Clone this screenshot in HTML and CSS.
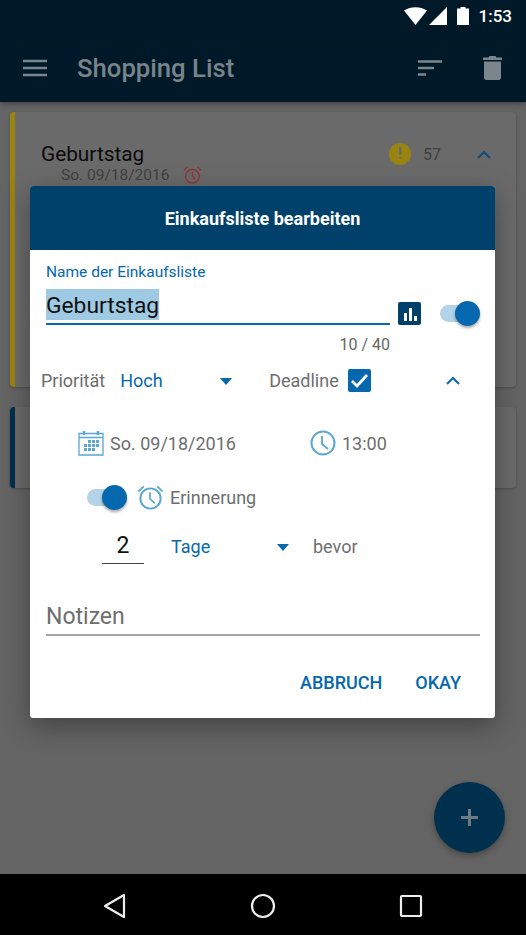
FILE: index.html
```html
<!DOCTYPE html>
<html lang="de">
<head>
    <meta charset="UTF-8">
    <meta name="viewport" content="width=device-width, initial-scale=1.0">
    <title>Shopping List</title>
    <link rel="stylesheet" href="styles.css">
</head>
<body>
<div class="screen">
    <div class="app">
        <div class="status-bar">
            <svg class="wifi" width="23" height="18" viewBox="0 0 23 18"><path d="M0 3.500 C6.500 -1 16.500 -1 23 3.500 L11.500 18 Z" fill="#fff"/></svg>
            <svg class="status-icon" width="18" height="18" viewBox="0 0 18 18"><path d="M0 18 L18 0 V18 Z" fill="#fff"/></svg>
            <svg class="status-icon battery" width="12" height="18" viewBox="0 0 12 18"><path d="M3.500 0 H8.500 V1.500 H12 V18 H0 V1.500 H3.500 Z" fill="#fff"/></svg>
            <span class="clock">1:53</span>
        </div>
        <header class="toolbar">
            <svg class="menu-icon" width="24" height="18" viewBox="0 0 24 18"><path d="M0 2 H24 M0 9 H24 M0 16 H24" stroke="#7a858c" stroke-width="2.500" fill="none"/></svg>
            <h1 class="toolbar-title">Shopping List</h1>
            <svg class="sort-icon" width="24" height="16" viewBox="0 0 24 16"><path d="M0 1.500 H24 M0 8 H16 M0 14.500 H8" stroke="#7a858c" stroke-width="2.500" fill="none"/></svg>
            <svg class="trash-icon" width="19" height="24" viewBox="0 0 19 24"><path d="M0 1.500 H5.500 L6.500 0 H12.500 L13.500 1.500 H19 V4 H0 Z M1 5.500 H18 V21.500 Q18 24 15.500 24 H3.500 Q1 24 1 21.500 Z" fill="#7a858c"/></svg>
        </header>
        <main class="list">
            <section class="list-card card-high">
                <div class="card-row">
                    <span class="card-title">Geburtstag</span>
                    <span class="prio-badge">!</span>
                    <span class="card-count">57</span>
                    <svg class="card-chevron" width="14" height="9" viewBox="0 0 14 9"><path d="M1 8 L7 2 L13 8" stroke="#0f4c7c" stroke-width="2" fill="none"/></svg>
                </div>
                <div class="card-date">
                    <span>So. 09/18/2016</span>
                    <svg width="19" height="18" viewBox="1 1 22 21"><circle cx="12" cy="13" r="8" fill="none" stroke="#9a2e2e" stroke-width="1.500"/><path d="M12 8 V13 L15 16 M2 6 L6 2 M22 6 L18 2" stroke="#9a2e2e" stroke-width="1.500" fill="none"/></svg>
                </div>
            </section>
            <section class="list-card card-low"></section>
        </main>
        <button class="fab" type="button">
            <svg width="17" height="17" viewBox="0 0 17 17"><path d="M8.500 0 V17 M0 8.500 H17" stroke="#6f7b82" stroke-width="3" fill="none"/></svg>
        </button>
    </div>

    <div class="dialog">
        <div class="dialog-header">Einkaufsliste bearbeiten</div>
        <div class="dialog-body">
            <div class="name-label">Name der Einkaufsliste</div>
            <div class="name-row">
                <div class="name-field"><span class="selected">Geburtstag</span></div>
                <span class="stats-btn">
                    <svg width="16" height="16" viewBox="0 0 16 16"><path d="M2 7 H5 V15 H2 Z M7 2 H10 V15 H7 Z M12 10 H15 V15 H12 Z" fill="#fff"/></svg>
                </span>
                <span class="switch name-switch"><span class="switch-thumb"></span></span>
            </div>
            <div class="counter">10 / 40</div>

            <div class="prio-row">
                <span class="muted">Priorität</span>
                <span class="spinner prio-spinner">Hoch<span class="caret"></span></span>
                <span class="muted">Deadline</span>
                <span class="checkbox">
                    <svg width="23" height="23" viewBox="0 0 23 23"><path d="M4 12 L9 17 L19 6" stroke="#fff" stroke-width="2.800" fill="none"/></svg>
                </span>
                <svg class="collapse" width="14" height="9" viewBox="0 0 14 9"><path d="M1 8 L7 2 L13 8" stroke="#0568ae" stroke-width="2" fill="none"/></svg>
            </div>

            <div class="date-row">
                <svg width="26" height="26" viewBox="0 0 26 26">
                    <path d="M1 3.500 H25 V25 H1 Z M1 7.500 H25" stroke="#5aa7d2" stroke-width="1.300" fill="none"/>
                    <path d="M6 1 V5 M20 1 V5" stroke="#5aa7d2" stroke-width="2.500"/>
                    <path d="M10 10 H13 V13 H10 Z M14 10 H17 V13 H14 Z M18 10 H21 V13 H18 Z M6 14 H9 V17 H6 Z M10 14 H13 V17 H10 Z M14 14 H17 V17 H14 Z M18 14 H21 V17 H18 Z M6 18 H9 V21 H6 Z M10 18 H13 V21 H10 Z M14 18 H17 V21 H14 Z" fill="#5aa7d2"/>
                </svg>
                <span class="date-text">So. 09/18/2016</span>
                <svg class="time-icon" width="26" height="26" viewBox="0 0 26 26"><circle cx="13" cy="13" r="11.500" fill="none" stroke="#5aa7d2" stroke-width="2"/><path d="M12 6 V14 L18 19" stroke="#5aa7d2" stroke-width="1.800" fill="none"/></svg>
                <span class="date-text">13:00</span>
            </div>

            <div class="reminder-row">
                <span class="switch"><span class="switch-thumb"></span></span>
                <svg class="alarm-icon" width="27" height="27" viewBox="0 0 28 28"><circle cx="14" cy="15" r="10.500" fill="none" stroke="#5aa7d2" stroke-width="2"/><path d="M13.500 8.500 V15.500 L18.500 20 M1.500 8 L7 2.500 M26.500 8 L21 2.500" stroke="#5aa7d2" stroke-width="1.800" fill="none"/></svg>
                <span class="muted">Erinnerung</span>
            </div>

            <div class="days-row">
                <span class="days-value">2</span>
                <span class="spinner days-spinner">Tage<span class="caret"></span></span>
                <span class="muted">bevor</span>
            </div>

            <div class="notes">Notizen</div>

            <div class="dialog-actions">
                <span class="action">ABBRUCH</span>
                <span class="action">OKAY</span>
            </div>
        </div>
    </div>

    <nav class="nav-bar">
        <svg width="24" height="26" viewBox="0 0 24 26"><path d="M21 2 V24 L2 13 Z" stroke="#eee" stroke-width="2.200" stroke-linejoin="round" fill="none"/></svg>
        <svg width="26" height="26" viewBox="0 0 26 26"><circle cx="13" cy="13" r="11" stroke="#eee" stroke-width="2.200" fill="none"/></svg>
        <svg width="24" height="24" viewBox="0 0 24 24"><rect x="2" y="2" width="20" height="20" rx="1" stroke="#eee" stroke-width="2.200" fill="none"/></svg>
    </nav>
</div>
</body>
</html>
```

FILE: styles.css
```css
* {
    box-sizing: border-box;
}
html, body {
    margin: 0;
    padding: 0;
}
body {
    width: 526px;
    height: 935px;
    overflow: hidden;
    font-family: Roboto, "Liberation Sans", sans-serif;
}
.screen {
    position: relative;
    width: 526px;
    height: 935px;
    display: flex;
    flex-direction: column;
    background: #646464;
}
.app {
    position: relative;
    flex: 1;
    display: flex;
    flex-direction: column;
    background: #646464;
}
.status-bar {
    height: 36px;
    display: flex;
    align-items: center;
    justify-content: flex-end;
    padding: 0 14px 5px 0;
    background: #001928;
}
.wifi {
    margin-right: 2px;
}
.status-icon {
    margin-right: 5px;
}
.battery {
    margin: 0 10px 0 5px;
}
.clock {
    color: #fff;
    font-size: 17px;
    font-weight: 500;
}
.toolbar {
    height: 66px;
    display: flex;
    align-items: center;
    padding: 0 24px 2px 23px;
    background: #001928;
    box-shadow: 0 2px 5px rgba(0,0,0,.3);
}
.toolbar-title {
    flex: 1;
    margin: 0 0 0 30px;
    color: #78838a;
    font-size: 25.700px;
    font-weight: 500;
}
.sort-icon {
    margin-right: 41px;
}
.list {
    padding: 10px 10px 0;
}
.list-card {
    background: #6a6a6a;
    border-radius: 4px;
    border-left: 5px solid #9a8410;
    box-shadow: 0 1px 3px rgba(0,0,0,.25);
}
.card-high {
    height: 275px;
    padding: 29px 25px 0 26px;
}
.card-low {
    height: 81px;
    margin-top: 20px;
    border-left-color: #00304d;
}
.card-row {
    display: flex;
    align-items: center;
    height: 26px;
}
.card-title {
    flex: 1;
    color: #0a0a0a;
    font-size: 20.800px;
}
.prio-badge {
    width: 22px;
    height: 22px;
    border-radius: 50%;
    background: #9a8410;
    color: #6a6a6a;
    font-size: 16px;
    font-weight: 700;
    text-align: center;
    line-height: 22px;
}
.card-count {
    margin: 0 36px 0 12px;
    color: #3f3f3f;
    font-size: 16px;
}
.card-date {
    display: flex;
    align-items: center;
    gap: 14px;
    margin-top: -1px;
    padding-left: 20px;
    color: #3f3f3f;
    font-size: 15.500px;
}
.fab {
    position: absolute;
    right: 21px;
    bottom: 21px;
    width: 71px;
    height: 71px;
    padding: 0;
    border: none;
    border-radius: 50%;
    background: #00304d;
    display: flex;
    align-items: center;
    justify-content: center;
    box-shadow: 0 3px 6px rgba(0,0,0,.3);
}
.nav-bar {
    height: 61px;
    display: flex;
    align-items: center;
    justify-content: space-between;
    padding: 2px 103px 0;
    background: #000;
}
.dialog {
    position: absolute;
    left: 30px;
    top: 186px;
    width: 465px;
    height: 532px;
    border-radius: 3px;
    overflow: hidden;
    background: #fff;
    box-shadow: 0 8px 26px rgba(0,0,0,.35);
}
.dialog-header {
    height: 64px;
    display: flex;
    align-items: center;
    justify-content: center;
    color: #fff;
    background: #00416b;
    font-size: 18px;
    font-weight: 700;
}
.dialog-body {
    padding: 14px 15px 0 16px;
}
.name-label {
    color: #0568ae;
    font-size: 15.500px;
    line-height: 16px;
}
.name-row {
    display: flex;
    align-items: flex-end;
    margin-top: 9px;
}
.name-field {
    width: 344px;
    height: 36px;
    border-bottom: 2px solid #0568ae;
    color: #111;
    font-size: 22.800px;
}
.selected {
    display: inline-block;
    height: 31px;
    line-height: 34px;
    background: #9fcae3;
}
.stats-btn {
    width: 23px;
    height: 23px;
    margin: 0 0 0 8px;
    border-radius: 2px;
    background: #00416b;
    display: flex;
    align-items: center;
    justify-content: center;
}
.switch {
    position: relative;
    display: inline-block;
    width: 36px;
    height: 17px;
    border-radius: 9px;
    background: #b2d3e8;
}
.name-switch {
    margin: 0 0 3px 19px;
}
.switch-thumb {
    position: absolute;
    right: -4px;
    top: -4px;
    width: 25px;
    height: 25px;
    border-radius: 50%;
    background: #0568ae;
    box-shadow: 0 2px 3px rgba(0,0,0,.35);
}
.counter {
    width: 344px;
    margin-top: 11px;
    color: #666;
    font-size: 16px;
    line-height: 18px;
    text-align: right;
}
.muted {
    color: #6e6e6e;
    font-size: 18px;
}
.prio-row {
    display: flex;
    align-items: center;
    height: 24px;
    margin-top: 14px;
    margin-left: -5px;
}
.spinner {
    position: relative;
    color: #0568ae;
    font-size: 18px;
}
.caret {
    position: absolute;
    right: 0;
    top: 8px;
    width: 0;
    height: 0;
    border-left: 6.500px solid transparent;
    border-right: 6.500px solid transparent;
    border-top: 7px solid #0568ae;
}
.prio-spinner {
    width: 112px;
    margin: 0 37px 0 15px;
}
.checkbox {
    width: 23px;
    height: 23px;
    margin-left: 9px;
    border-radius: 2px;
    background: #0568ae;
}
.collapse {
    margin-left: 75px;
}
.date-row {
    display: flex;
    align-items: center;
    height: 30px;
    margin-top: 36px;
    padding-left: 32px;
}
.date-text {
    color: #6e6e6e;
    font-size: 18px;
    margin-left: 6px;
}
.time-icon {
    margin-left: 74px;
}
.reminder-row {
    display: flex;
    align-items: center;
    height: 30px;
    margin-top: 24px;
    padding-left: 41px;
}
.alarm-icon {
    margin: 0 6px 0 14px;
}
.days-row {
    display: flex;
    align-items: center;
    height: 36px;
    margin-top: 16px;
    padding-left: 56px;
}
.days-value {
    width: 42px;
    height: 36px;
    padding-top: 4px;
    border-bottom: 1px solid #444;
    color: #111;
    font-size: 23px;
    text-align: center;
}
.days-spinner {
    width: 118px;
    margin: 0 24px 0 27px;
}
.notes {
    height: 34px;
    margin-top: 38px;
    border-bottom: 2px solid #a6a6a6;
    color: #6e6e6e;
    font-size: 23px;
    line-height: 30px;
}
.dialog-actions {
    display: flex;
    justify-content: flex-end;
    gap: 33px;
    padding: 36px 19px 0 0;
}
.action {
    color: #0568ae;
    font-size: 18px;
    font-weight: 500;
}
```
